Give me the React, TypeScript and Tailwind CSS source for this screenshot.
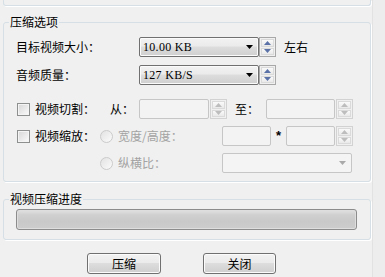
import React from 'react';

const cjk = "font-['Noto_Sans_CJK_SC','Noto_Sans',sans-serif]";

function Arrow({ up, color }: { up?: boolean; color: string }) {
  return (
    <svg width="7" height="4" viewBox="0 0 7 4">
      <path d={up ? 'M3.5 0L7 4H0Z' : 'M0 0H7L3.5 4Z'} fill={color} />
    </svg>
  );
}

function Spinner({ disabled }: { disabled?: boolean }) {
  const color = disabled ? '#bdbdbd' : '#5a72a8';
  return (
    <div
      className={`flex h-5 w-[17px] flex-col gap-[1px] border p-[1px] ${
        disabled ? 'border-[#d2d2d2]' : 'border-[#a8a8a8]'
      } bg-[#f0f0f0]`}
    >
      <div className="flex flex-1 items-center justify-center border border-[#dadada] bg-gradient-to-b from-[#fafafa] to-[#e9e9e9]">
        <Arrow up color={color} />
      </div>
      <div className="flex flex-1 items-center justify-center border border-[#dadada] bg-gradient-to-b from-[#fafafa] to-[#e9e9e9]">
        <Arrow color={color} />
      </div>
    </div>
  );
}

function Combo({ value, width }: { value: string; width: string }) {
  return (
    <div
      className={`flex h-5 ${width} items-center justify-between rounded-[2px] border border-[#707070] bg-[linear-gradient(#f2f2f2_0%,#ebebeb_45%,#dddddd_50%,#cfcfcf_100%)] pl-[3px] pr-[5px] shadow-[inset_0_0_0_1px_#fbfbfb]`}
    >
      <span className="[font-family:'Liberation_Serif',serif] text-[12px] leading-none tracking-[0.3px] text-black">
        {value}
      </span>
      <Arrow color="#000" />
    </div>
  );
}

function Field({ width }: { width: string }) {
  return <div className={`h-5 ${width} rounded-[2px] border border-[#c6c6c6] bg-[#f3f3f3]`} />;
}

function Check() {
  return (
    <div className="h-[13px] w-[13px] border border-[#8e8f8f] bg-gradient-to-br from-[#d6d6d6] to-[#fbfbfb] shadow-[inset_0_0_0_1px_#f4f4f4]" />
  );
}

function Radio() {
  return (
    <div className="h-[13px] w-[13px] rounded-full border border-[#cbcbcb] bg-gradient-to-br from-[#e2e2e2] to-[#fbfbfb]" />
  );
}

function Button({ label, width }: { label: string; width: string }) {
  return (
    <div
      className={`flex h-[21px] ${width} items-center justify-center rounded-[3px] border border-[#707070] bg-[linear-gradient(#f2f2f2_0%,#ebebeb_45%,#dddddd_50%,#cfcfcf_100%)] text-[12px] text-black shadow-[inset_0_0_0_1px_#fbfbfb]`}
    >
      {label}
    </div>
  );
}

export default function App() {
  return (
    <div className={`flex h-[277px] w-[385px] overflow-hidden bg-[#f0f0f0] ${cjk} text-[12px] text-black`}>
      <div className="flex w-[372px] flex-col pl-[3px]">
        {/* end of the group above */}
        <div className="h-[6px] w-[368px] rounded-b-[3px] border-x border-b border-[#d5dfe5] shadow-[1px_1px_0_#ffffff]" />

        {/* 压缩选项 */}
        <fieldset className="mt-[8px] w-[368px] rounded-[3px] border border-[#d5dfe5] px-0 pb-[8px] shadow-[1px_1px_0_#ffffff]">
          <legend className="ml-[5px] px-[1px] text-[12px] leading-4">压缩选项</legend>
          <div className="flex flex-col pl-[12px]">
            <div className="mt-[7px] flex h-5 items-center">
              <span className="w-[123px]">目标视频大小：</span>
              <Combo value="10.00 KB" width="w-[120px]" />
              <Spinner />
              <span className="ml-[8px]">左右</span>
            </div>
            <div className="mt-[8px] flex h-5 items-center">
              <span className="w-[123px]">音频质量：</span>
              <Combo value="127 KB/S" width="w-[120px]" />
              <Spinner />
            </div>
            <div className="mt-[14px] flex h-5 items-center">
              <div className="flex w-[94px] items-center pl-[1px]">
                <Check />
                <span className="ml-[5px]">视频切割：</span>
              </div>
              <span className="w-[29px]">从：</span>
              <Field width="w-[70px]" />
              <div className="ml-[1px]">
                <Spinner disabled />
              </div>
              <span className="ml-[8px] w-[31px]">至：</span>
              <Field width="w-[69px]" />
              <div className="ml-[1px]">
                <Spinner disabled />
              </div>
            </div>
            <div className="mt-[7px] flex h-5 items-center">
              <div className="flex w-[84px] items-center pl-[1px]">
                <Check />
                <span className="ml-[5px]">视频缩放：</span>
              </div>
              <div className="flex w-[122px] items-center">
                <Radio />
                <span className="ml-[5px] text-[#a3a3a3]">宽度/高度：</span>
              </div>
              <Field width="w-[49px]" />
              <span className="w-[15px] text-center font-['Liberation_Sans',sans-serif] text-[13px] font-bold">*</span>
              <Field width="w-[49px]" />
              <div className="ml-[1px]">
                <Spinner disabled />
              </div>
            </div>
            <div className="mt-[7px] flex h-5 items-center pl-[84px]">
              <div className="flex w-[122px] items-center">
                <Radio />
                <span className="ml-[5px] text-[#a3a3a3]">纵横比：</span>
              </div>
              <div className="flex h-5 w-[130px] items-center justify-end rounded-[2px] border border-[#c6c6c6] bg-[#f4f4f4] pr-[5px]">
                <Arrow color="#a9a9a9" />
              </div>
            </div>
          </div>
        </fieldset>

        {/* 视频压缩进度 */}
        <fieldset className="mt-[9px] w-[368px] rounded-[3px] border border-[#d5dfe5] px-0 pb-[9px] shadow-[1px_1px_0_#ffffff]">
          <legend className="ml-[5px] px-[1px] text-[12px] leading-4">视频压缩进度</legend>
          <div className="mt-[2px] pl-[12px]">
            <div className="h-[21px] w-[341px] rounded-[3px] border border-[#8c8c8c] bg-[linear-gradient(#e2e2e2_0%,#d0d0d0_25%,#c9c9c9_60%,#cdcdcd_100%)] shadow-[inset_0_0_0_1px_#dedede]" />
          </div>
        </fieldset>

        <div className="mt-[13px] flex pl-[84px]">
          <Button label="压缩" width="w-[74px]" />
          <div className="ml-[42px]">
            <Button label="关闭" width="w-[73px]" />
          </div>
        </div>
      </div>
      <div className="flex-1 border-l border-[#e2e2e2] bg-[#ededed]" />
    </div>
  );
}
